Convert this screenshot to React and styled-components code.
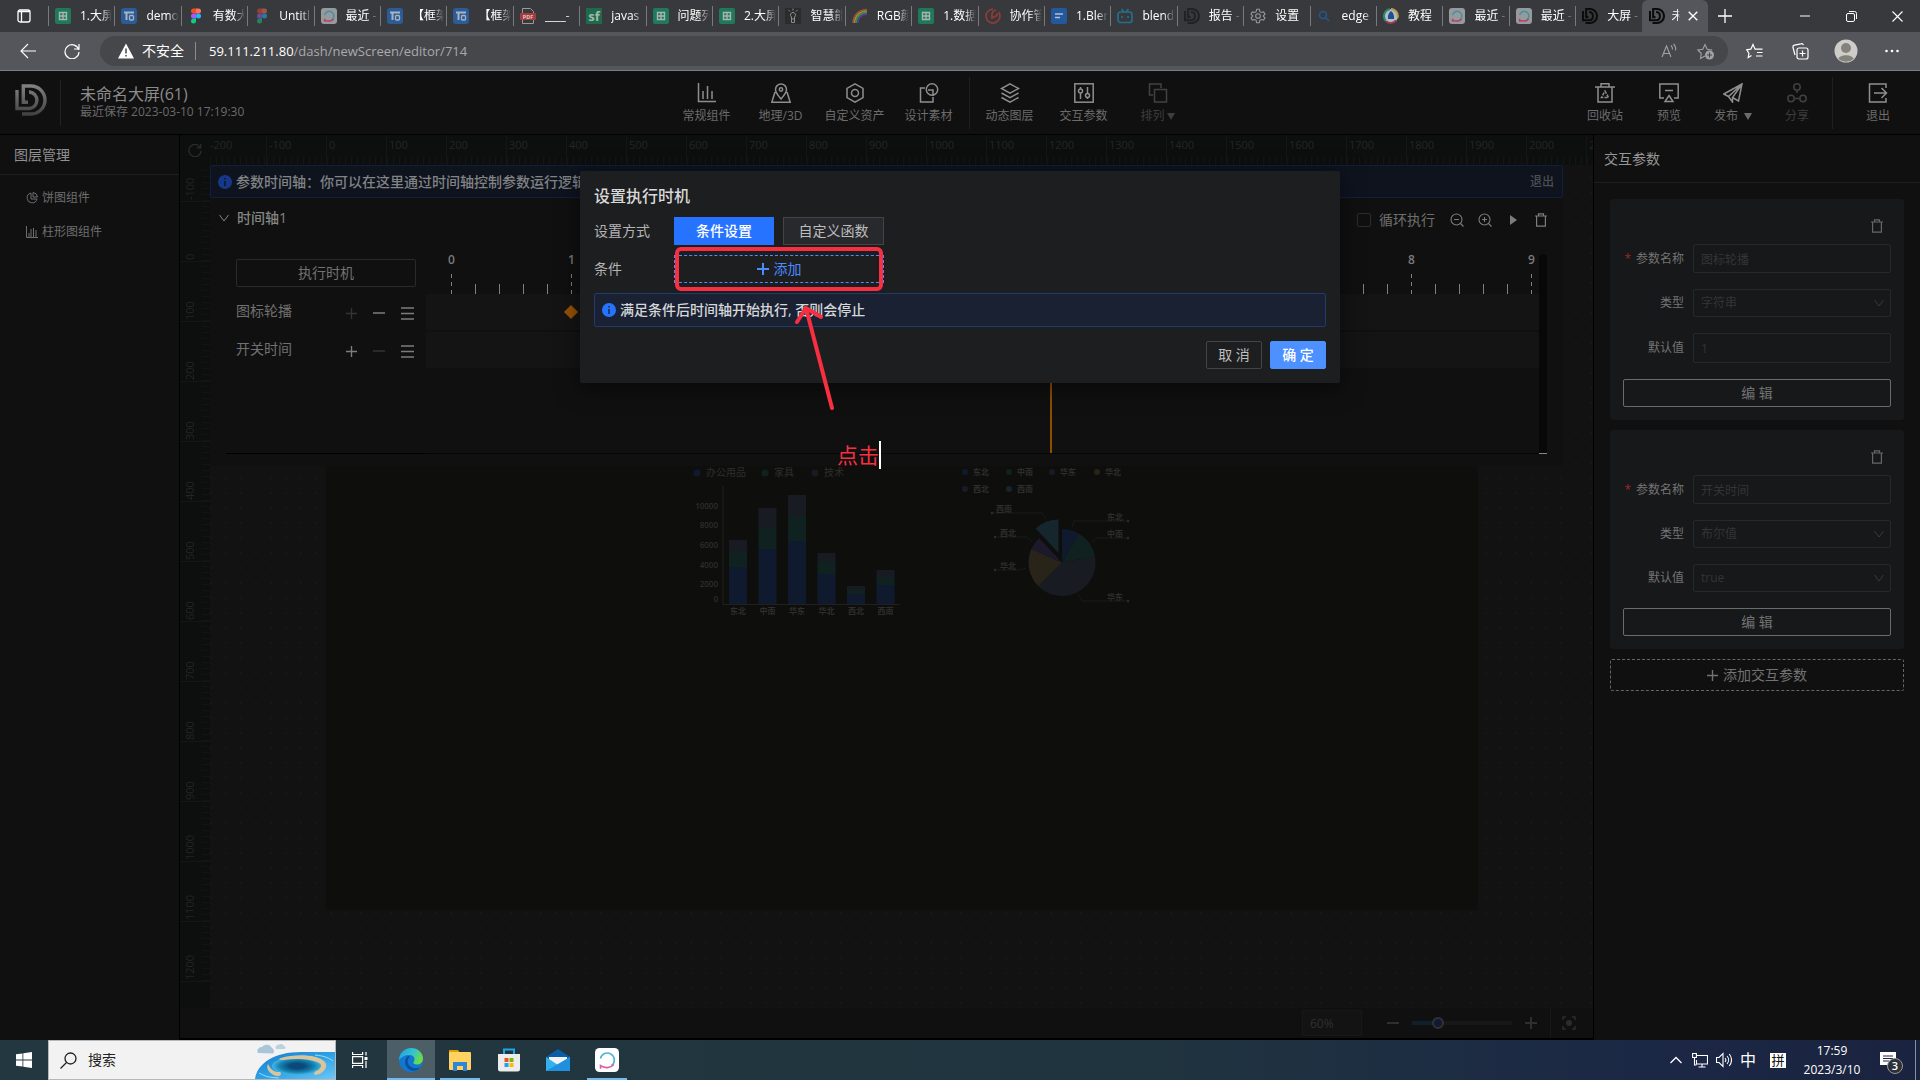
import React, { useState } from 'react'
import styled, { createGlobalStyle, css } from 'styled-components'

const GlobalStyle = createGlobalStyle`
    * { box-sizing: border-box; }
    body {
        margin: 0;
        background: #101010;
        color: #808080;
        font: 14px/20px "Open Sans", "Noto Sans CJK SC", sans-serif;
    }
    button, input, select {
        font: inherit;
        color: inherit;
        margin: 0;
        padding: 0;
        border: 0;
        background: none;
        opacity: 1;
    }
    svg { display: block; flex: none; }
`

/* ---------- layout ---------- */

const Page = styled.div`
    display: flex;
    flex-direction: column;
    height: 100vh;
    overflow: hidden;
`
const Editor = styled.div`
    flex: 1;
    min-height: 0;
    position: relative;
    display: flex;
    flex-direction: column;
    background: #101010;
`
const Body = styled.div`
    flex: 1;
    min-height: 0;
    display: grid;
    grid-template-columns: 180px minmax(0, 1fr) 327px;
    grid-template-rows: minmax(0, 1fr);
`

/* ---------- browser ---------- */

const TabStrip = styled.div`
    display: flex;
    align-items: center;
    height: 32px;
    background: #38393d;
    color: #fff;
`
const TabMenu = styled.button`
    width: 48px;
    display: flex;
    justify-content: center;
`
const Tabs = styled.div`
    flex: 1;
    min-width: 0;
    display: grid;
    grid-auto-flow: column;
    grid-auto-columns: minmax(0, 1fr);
    align-items: center;
`
const Tab = styled.button`
    min-width: 0;
    height: 20px;
    display: flex;
    align-items: center;
    gap: 9px;
    padding: 0 2px 0 6px;
    border-left: 1px solid #797a7d;
    font-size: 12px;
    ${p => p.$active && css`
        height: 32px;
        border-left: 0;
        padding: 0 9px 0 7px;
        gap: 7px;
        border-radius: 6px 6px 0 0;
        background: #55565b;
    `}
`
const TabText = styled.span`
    flex: 1;
    min-width: 0;
    overflow: hidden;
    white-space: nowrap;
    text-align: left;
    mask-image: linear-gradient(to right, #000 65%, transparent);
`
const WindowButtons = styled.div`
    width: 212px;
    display: flex;
    align-items: center;
`
const NewTab = styled.button`
    display: flex;
    justify-content: center;
    width: 34px;
    margin-right: auto;
`
const WinButton = styled.button`
    display: flex;
    justify-content: center;
    width: 46px;
`
const NavBar = styled.div`
    display: flex;
    align-items: center;
    height: 39px;
    padding: 0 5px 0 20px;
    background: #55565b;
    border-bottom: 1px solid #7d7e82;
    color: #fff;
`
const NavButton = styled.button`
    width: 44px;
    display: flex;
    ${p => p.$center && css`
        width: 46px;
        justify-content: center;
    `}
`
const Address = styled.div`
    flex: 1;
    display: flex;
    align-items: center;
    height: 30px;
    margin-left: -8px;
    margin-right: 3px;
    padding: 0 14px 0 18px;
    border-radius: 15px;
    background: #46474b;
`
const Unsafe = styled.span`
    padding: 0 11px 0 8px;
    border-right: 1px solid #8b8c8f;
    line-height: 18px;
`
const Url = styled.span`
    flex: 1;
    margin-left: 13px;
    font-size: 13px;
    color: #a9aaac;
    b { font-weight: 400; color: #fff; }
`
const AddressIcons = styled.div`
    display: flex;
    gap: 20px;
    color: #a0a1a3;
`

/* ---------- editor header ---------- */

const Header = styled.header`
    display: grid;
    grid-template-columns: 12fr auto 13fr;
    height: 64px;
    border-bottom: 1px solid #000;
`
const HeaderLeft = styled.div`
    display: flex;
    align-items: center;
`
const LogoBox = styled.div`
    width: 61px;
    height: 46px;
    display: flex;
    align-items: center;
    padding-left: 15px;
    padding-bottom: 5px;
    border-right: 1px solid #222;
`
const TitleBox = styled.div`
    padding-left: 19px;
    padding-bottom: 2px;
`
const Title = styled.div`
    font-size: 16px;
    line-height: 20px;
    color: #8c8c8c;
`
const Saved = styled.div`
    font-size: 12px;
    line-height: 16px;
    color: #6b6b6b;
`
const Tools = styled.nav`
    display: flex;
    align-items: center;
    ${p => p.$end && css`justify-content: flex-end;`}
`
const Tool = styled.button`
    width: ${p => p.$w || 74}px;
    display: flex;
    flex-direction: column;
    align-items: center;
    gap: 5px;
    padding-top: 2px;
    font-size: 12px;
    line-height: 16px;
    white-space: nowrap;
    color: ${p => p.$dim ? '#3d3d3d' : '#6c6c6c'};
    svg { color: ${p => p.$dim ? '#414141' : '#8e8e8e'}; }
`
const ToolLabel = styled.span`
    display: flex;
    align-items: center;
    gap: ${p => p.$gap || 2}px;
    svg { color: inherit; }
`
const ToolDivider = styled.span`
    width: 1px;
    height: 52px;
    margin: 0 3px;
    background: #1f1f1f;
`

/* ---------- side panels ---------- */

const Layers = styled.aside`
    border-right: 1px solid #000;
`
const LayersTitle = styled.h2`
    margin: 0 0 6px;
    height: 40px;
    padding-left: 14px;
    border-bottom: 1px solid #1e1e1e;
    font-size: 14px;
    font-weight: 400;
    line-height: 40px;
    color: #919191;
`
const Layer = styled.div`
    display: flex;
    align-items: center;
    gap: 4px;
    height: 34px;
    padding-left: 26px;
    font-size: 12px;
    color: #6e6e6e;
`
const Params = styled.aside`
    border-left: 1px solid #000;
`
const ParamsTitle = styled.h2`
    margin: 0;
    height: 48px;
    padding-left: 10px;
    border-bottom: 1px solid #1e1e1e;
    font-size: 14px;
    font-weight: 400;
    line-height: 48px;
    color: #969696;
`
const ParamList = styled.div`
    display: flex;
    flex-direction: column;
    gap: 10px;
    padding: 16px 16px 0;
    font-size: 12px;
`
const Card = styled.section`
    display: flex;
    flex-direction: column;
    gap: 16px;
    padding: 20px 13px 13px;
    border-radius: 3px;
    background: #171819;
`
const CardHead = styled.div`
    display: flex;
    justify-content: flex-end;
    height: 9px;
    padding-right: 8px;
    color: #666;
`
const Field = styled.div`
    display: grid;
    grid-template-columns: 61px 1fr;
    column-gap: 9px;
    align-items: center;
`
const FieldLabel = styled.label`
    text-align: right;
    white-space: nowrap;
    color: #747474;
`
const Star = styled.span`
    margin-right: 5px;
    color: #97292b;
`
const FieldInput = styled.input`
    width: 100%;
    min-width: 0;
    height: ${p => p.$tall ? 30 : 29}px;
    padding: 0 7px;
    border: 1px solid #272829;
    border-radius: 2px;
    color: #343536;
    outline: none;
`
const SelectBox = styled.div`
    position: relative;
    svg {
        position: absolute;
        right: 7px;
        top: 9px;
        color: #3a3b3c;
    }
`
const FieldSelect = styled.select`
    width: 100%;
    height: 28px;
    padding: 0 7px;
    appearance: none;
    border: 1px solid #272829;
    border-radius: 2px;
    color: #343536;
`
const EditButton = styled.button`
    height: 28px;
    border: 1px solid #6a6b6b;
    border-radius: 2px;
    font-size: 14px;
    color: #727272;
`
const AddParam = styled.button`
    display: flex;
    align-items: center;
    justify-content: center;
    gap: 5px;
    height: 32px;
    border: 1px dashed #666;
    border-radius: 2px;
    font-size: 14px;
    color: #727272;
`

/* ---------- workspace ---------- */

const Workspace = styled.main`
    min-width: 0;
    display: grid;
    grid-template-columns: 30px minmax(0, 1fr);
    grid-template-rows: 30px minmax(0, 1fr) 32px;
`
const Corner = styled.button`
    display: flex;
    align-items: center;
    justify-content: center;
    background: #0d0f0e;
    color: #2c2d2d;
`
const RulerX = styled.div`
    display: flex;
    overflow: hidden;
    padding-left: 56px;
    background: #0d0f0e;
    font-size: 11px;
    line-height: 20px;
    color: #242626;
`
const RulerMark = styled.span`
    flex: none;
    width: 60px;
    padding-left: 2px;
    border-left: 1px solid #131615;
    background: repeating-linear-gradient(to right, #121514 0 1px, transparent 1px 6px) bottom / 100% 8px no-repeat;
    ${p => p.$first && css`
        width: 56px;
        margin-left: -56px;
        padding-left: 0;
        border-left: 0;
    `}
`
const RulerY = styled.div`
    overflow: hidden;
    padding-top: 37px;
    background: #0d0f0e;
    font-size: 11px;
    line-height: 20px;
    color: #242626;
`
const RulerMarkY = styled.span`
    display: block;
    width: 30px;
    height: 60px;
    padding-top: 1px;
    padding-left: 10px;
    writing-mode: vertical-rl;
    transform: rotate(180deg);
    border-top: 1px solid #131615;
    background: repeating-linear-gradient(#121514 0 1px, transparent 1px 6px) left / 8px 100% no-repeat;
    ${p => p.$first && css`margin-top: -60px;`}
`
const Stage = styled.div`
    position: relative;
    overflow: hidden;
    background: radial-gradient(circle at 1px 1px, #161817 1px, transparent 1px) 0 12px / 15px 15px #121212;
`
const Artboard = styled.div`
    position: absolute;
    left: 116px;
    top: 97px;
    width: 1152px;
    height: 648px;
    background: #0e0e0c;
`
const StageBar = styled.div`
    grid-column: 1 / 3;
    display: flex;
    align-items: center;
    justify-content: flex-end;
    border-bottom: 2px solid #000;
    font-size: 12px;
    color: #333;
`
const ZoomInput = styled.input`
    width: 60px;
    height: 26px;
    padding-left: 7px;
    border: 1px solid #181818;
    background: #131313;
    color: #303030;
`
const ZoomButton = styled.button`
    display: flex;
    justify-content: center;
    width: 38px;
    color: #2f2f2f;
`
const Slider = styled.input`
    width: 100px;
    height: 14px;
    appearance: none;
    background: linear-gradient(to right, #10202b 26%, #171717 26%) center / 100% 4px no-repeat;
    &::-webkit-slider-thumb {
        appearance: none;
        width: 12px;
        height: 12px;
        border: 2px solid #303236;
        border-radius: 50%;
        background: #101b33;
    }
`
const FitButton = styled.button`
    display: flex;
    justify-content: center;
    align-items: center;
    width: 43px;
    height: 30px;
    padding-right: 6px;
    border-left: 1px solid #181818;
    color: #2c2c2c;
`

/* ---------- timeline ---------- */

const Timeline = styled.section`
    position: absolute;
    top: 0;
    left: 0;
    right: 30px;
    height: 301px;
    background: #101010;
`
const Banner = styled.div`
    display: flex;
    align-items: center;
    gap: 4px;
    height: ${p => p.$modal ? 34 : 33}px;
    padding: 0 8px 0 7px;
    border: 1px solid ${p => p.$modal ? '#21396b' : '#121f3c'};
    border-radius: 2px;
    background: ${p => p.$modal ? '#1a2133' : '#0e131e'};
    color: ${p => p.$modal ? '#d6d7d9' : '#828385'};
    font-weight: 500;
`
const BannerExit = styled.button`
    margin-left: auto;
    font-size: 12px;
    color: #4d4e51;
`
const TimelineHead = styled.div`
    display: flex;
    align-items: center;
    height: 43px;
    padding: 0 14px 0 9px;
    color: #848484;
`
const TimelineName = styled.button`
    display: flex;
    align-items: center;
    gap: 8px;
    margin-right: auto;
    padding-bottom: 3px;
    font-weight: 500;
`
const Check = styled.label`
    display: flex;
    align-items: center;
    gap: 8px;
    margin-right: 2px;
    color: #6f6f6f;
    input {
        appearance: none;
        width: 14px;
        height: 14px;
        border: 1px solid #2c2c2c;
        border-radius: 2px;
    }
`
const HeadIcon = styled.button`
    width: 16px;
    display: flex;
    justify-content: center;
    margin-left: 12px;
    color: #7c7c7c;
`
const TimelineBody = styled.div`
    display: grid;
    grid-template-columns: 200px minmax(0, 1fr) 8px;
    margin: 13px 16px 0;
    height: 200px;
    border-bottom: 1px solid #060606;
`
const TrackNames = styled.div`
    margin-bottom: -1px;
    padding: 5px 10px 0;
    border-bottom: 1px solid #000;
`
const RunButton = styled.button`
    width: 100%;
    height: 28px;
    margin-bottom: 7px;
    border: 1px solid #2a2a2a;
    border-radius: 2px;
    color: #727272;
`
const TrackName = styled.div`
    display: flex;
    align-items: center;
    height: 38px;
    padding-bottom: 4px;
    color: #717171;
    span { flex: 1; }
`
const TrackButton = styled.button`
    width: 28px;
    display: flex;
    justify-content: center;
    padding-top: 4px;
    color: ${p => p.$dim ? '#333' : '#7c7c7c'};
    &:last-child {
        width: 23px;
        justify-content: flex-end;
        padding-right: 2px;
    }
`
const Tracks = styled.div`
    position: relative;
    overflow: hidden;
`
const Seconds = styled.div`
    display: flex;
    height: 40px;
    padding-left: 25px;
    font-size: 12px;
    line-height: 12px;
    font-weight: 600;
    color: #7a7a7a;
`
const Second = styled.div`
    flex: none;
    width: 120px;
    background: linear-gradient(to right,
        transparent 24px, #808080 24px 25px, transparent 25px 48px,
        #808080 48px 49px, transparent 49px 72px,
        #808080 72px 73px, transparent 73px 96px,
        #808080 96px 97px, transparent 97px) bottom / 100% 10px no-repeat;
`
const SecondLabel = styled.span`
    display: flex;
    justify-content: center;
    width: 1px;
    height: 20px;
`
const SecondTick = styled.span`
    display: block;
    width: 1px;
    height: 20px;
    background: repeating-linear-gradient(#808080 0 4px, transparent 4px 8px);
`
const Track = styled.div`
    display: flex;
    align-items: center;
    height: 36px;
    margin-bottom: 2px;
    background: #141414;
`
const KeyFrame = styled.span`
    width: 10px;
    height: 10px;
    margin-left: 140px;
    transform: rotate(45deg);
    background: #985204;
`
const PlayHead = styled.span`
    position: absolute;
    top: 40px;
    bottom: 0;
    left: 624px;
    width: 2px;
    background: #8f4d00;
`
const ScrollBar = styled.div`
    border-radius: 4px 4px 0 0;
    background: #080808;
    margin-bottom: -1px;
    border-bottom: 1px solid #888;
`

/* ---------- modal ---------- */

const Modal = styled.div`
    position: absolute;
    top: 100px;
    left: 50%;
    width: 760px;
    margin-left: -380px;
    padding: 14px;
    border-radius: 2px;
    background: #1d1e20;
    box-shadow: 0 4px 24px rgba(0, 0, 0, .5);
    color: #b4b4b5;
`
const ModalTitle = styled.h1`
    margin: 0 0 10px;
    font-size: 16px;
    line-height: 22px;
    font-weight: 500;
    color: #d9d9d9;
`
const ModalRow = styled.div`
    display: grid;
    grid-template-columns: 80px 100px 101px;
    align-items: center;
    height: 28px;
    margin-bottom: 10px;
`
const ModeButton = styled.button`
    height: 28px;
    border: 1px solid ${p => p.$on ? '#2673ff' : '#434446'};
    background: ${p => p.$on ? '#2673ff' : '#28292c'};
    color: ${p => p.$on ? '#fff' : '#bdbdbe'};
    font-weight: ${p => p.$on ? 500 : 400};
    ${p => !p.$on && css`margin-left: 9px; margin-right: -9px;`}
`
const AddButton = styled.button`
    grid-column: 2 / 4;
    display: flex;
    align-items: center;
    justify-content: center;
    gap: 5px;
    height: 28px;
    margin-right: -9px;
    border: 1px dashed #4b8bff;
    color: #4b8bff;
`
const ModalFoot = styled.div`
    display: flex;
    justify-content: flex-end;
    gap: 8px;
    margin-top: 14px;
`
const FootButton = styled.button`
    width: 56px;
    height: 28px;
    border: 1px solid ${p => p.$primary ? '#4d90ff' : '#434446'};
    border-radius: 2px;
    background: ${p => p.$primary ? '#4d90ff' : 'transparent'};
    color: ${p => p.$primary ? '#fff' : '#bdbdbe'};
    font-weight: ${p => p.$primary ? 500 : 400};
`

/* ---------- marks over the modal ---------- */

const MarkFrame = styled.div`
    position: absolute;
    top: 176px;
    left: 50%;
    width: 208px;
    height: 44px;
    margin-left: -285px;
    border: 4px solid #f72f40;
    border-radius: 6px;
`
const MarkArrow = styled.svg`
    position: absolute;
    top: 231px;
    left: 50%;
    margin-left: -166px;
`
const MarkNote = styled.div`
    position: absolute;
    top: 370px;
    left: 50%;
    margin-left: -123px;
    height: 28px;
    border-right: 2px solid #fff;
    font-size: 21px;
    line-height: 28px;
    color: #f72f40;
`

/* ---------- taskbar ---------- */

const TaskBar = styled.footer`
    display: flex;
    height: 40px;
    background: linear-gradient(to right, #22373f, #20343f 60%, #1b2845 85%, #1a2340);
    color: #fff;
`
const TaskButton = styled.button`
    display: flex;
    align-items: center;
    justify-content: center;
    width: ${p => p.$w || 49}px;
    margin-left: ${p => p.$gap || 0}px;
    ${p => p.$open && css`border-bottom: 2px solid #76b9ed; padding-top: 2px;`}
    ${p => p.$active && css`background: #4c5f66;`}
`
const Search = styled.label`
    display: flex;
    align-items: center;
    width: 288px;
    padding-left: 11px;
    border: 1px solid #b5b8ba;
    background: #f2f2f2;
    color: #222;
    input {
        flex: 1;
        min-width: 0;
        padding-left: 11px;
        outline: none;
        &::placeholder { color: #222; opacity: 1; }
    }
`
const Tray = styled.div`
    display: flex;
    align-items: center;
    margin-left: auto;
    padding-right: 4px;
`
const TrayItem = styled.span`
    display: flex;
    justify-content: center;
    width: ${p => p.$w || 24}px;
    font-size: 16px;
`
const Ime = styled.span`
    padding: 0 1px;
    background: #fff;
    color: #111;
    font-size: 13px;
    line-height: 15px;
`
const Clock = styled.time`
    width: 72px;
    text-align: center;
    font-size: 12px;
    line-height: 19px;
`
const Notice = styled.span`
    position: relative;
    margin-left: 12px;
    width: 35px;
`
const NoticeCount = styled.span`
    position: absolute;
    left: 7px;
    top: 6px;
    width: 16px;
    height: 16px;
    border: 1px solid #999;
    border-radius: 50%;
    background: #2c3038;
    font-size: 11px;
    line-height: 14px;
    font-weight: 600;
    text-align: center;
`
const ShowDesktop = styled.span`
    width: 1px;
    height: 40px;
    background: #8b8f9c;
`

/* ---------- icons ---------- */

const Svg = ({ size = 20, w, h, box = '0 0 20 20', sw = 1.5, children }) => (
    <svg width={w || size} height={h || size} viewBox={box} fill="none" stroke="currentColor" strokeWidth={sw} aria-hidden="true">
        {children}
    </svg>
)

const Plus = ({ size = 12, sw = 1.5 }) => <Svg size={size} box="0 0 12 12" sw={sw}><path d="M6 0v12M0 6h12" /></Svg>
const Minus = ({ size = 12, sw = 1.5 }) => <Svg size={size} box="0 0 12 12" sw={sw}><path d="M0 6h12" /></Svg>
const Menu = () => <Svg size={13} box="0 0 13 13"><path d="M0 1h13M0 6.500h13M0 12h13" /></Svg>
const Down = ({ size = 10 }) => <Svg size={size} box="0 0 10 10" sw={1}><path d="M.5 2l4.500 6 4.500-6" /></Svg>
const Caret = () => <svg width="8" height="7" viewBox="0 0 8 7" fill="currentColor"><path d="M0 0h8L4 7z" /></svg>
const Trash = () => (
    <Svg w={12} h={14} box="0 0 12 14" sw={1.2}><path d="M0 3h12M1.600 3v10.200h8.800V3M3.500 3V.8h5V3" /></Svg>
)
const Info = ({ fill, ink }) => (
    <svg width="14" height="14" viewBox="0 0 14 14"><circle cx="7" cy="7" r="7" fill={fill} /><path d="M7 3v1.600M7 6v5" stroke={ink} strokeWidth="1.400" /></svg>
)

const DdMark = ({ size, from, to, id, sw = 3.4 }) => (
    <svg width={size} height={size} viewBox="0 0 32 32" fill="none" stroke={`url(#${id})`} strokeWidth={sw}>
        <defs>
            <linearGradient id={id} x1="0" y1="0" x2="0" y2="32" gradientUnits="userSpaceOnUse">
                <stop stopColor={from} /><stop offset="1" stopColor={to} />
            </linearGradient>
        </defs>
        <path d="M2 6v18.500h12.500a8.300 8.300 0 0 0 0-16.500H14" />
        <path d="M13 18.300H8.300V2H16a13.800 13.800 0 0 1 0 28H7" />
    </svg>
)

const Sheet = () => (
    <svg width="16" height="16" viewBox="0 0 16 16"><rect width="16" height="16" rx="2" fill="#20795a" /><path d="M4.500 4.500h7v7h-7zM8 4.500v7M4.500 8h7" fill="none" stroke="#a9b5b0" strokeWidth="1.400" /></svg>
)
const To = () => (
    <svg width="16" height="16" viewBox="0 0 16 16"><rect width="16" height="16" rx="3" fill="#2b5c98" /><path d="M3 4.500h10M5.500 4.500V12" stroke="#a9b3c0" strokeWidth="2" /><rect x="8.500" y="7.500" width="4" height="4.500" rx="1" fill="none" stroke="#a9b3c0" strokeWidth="1.300" /></svg>
)
const Figma = ({ dim }) => (
    <svg width="16" height="16" viewBox="0 0 16 16" opacity={dim ? .5 : 1}>
        <path d="M8 .5H5.500a2.500 2.500 0 0 0 0 5H8z" fill="#f24e1e" /><path d="M8 .5h2.500a2.500 2.500 0 0 1 0 5H8z" fill="#ff7262" />
        <path d="M8 5.500H5.500a2.500 2.500 0 0 0 0 5H8z" fill="#a259ff" /><circle cx="10.500" cy="8" r="2.500" fill="#1abcfe" />
        <path d="M8 10.500H5.500A2.500 2.500 0 1 0 8 13z" fill="#0acf83" />
    </svg>
)
const FigmaDim = () => <Figma dim />
const Mo = ({ size = 16, bg = '#98999b', a = '#3f93a8', b = '#b3406f', sw = 1.5 }) => (
    <svg width={size} height={size} viewBox="0 0 16 16" fill="none" strokeWidth={sw}><rect width="16" height="16" rx="3" fill={bg} /><path d="M3.600 7A4.700 4.700 0 1 1 11 11.800" stroke={a} /><path d="M12.500 11c-2 2.500-6 2.800-8.800.8V13.800" stroke={b} /></svg>
)
const Pdf = () => (
    <svg width="16" height="16" viewBox="0 0 16 16"><path d="M2.500.5h8l3 3v12h-11z" fill="none" stroke="#9a9a9a" /><rect x="0" y="5" width="16" height="7" rx="1" fill="#a53c3c" /><text x="8" y="10.600" fontSize="5.500" fontWeight="700" fill="#d9c9c9" textAnchor="middle">PDF</text></svg>
)
const Sf = () => (
    <svg width="16" height="16" viewBox="0 0 16 16"><rect width="16" height="16" fill="#1f6a4b" /><text x="8" y="12.500" fontSize="13" fontWeight="700" fill="#a3b8ae" textAnchor="middle">sf</text></svg>
)
const Bulb = () => (
    <svg width="16" height="16" viewBox="0 0 16 16" fill="none" stroke="#8d8d8d"><rect width="16" height="16" fill="#2b2c2e" stroke="none" /><path d="M6.500 11v3.500h3V11M6.500 11V9a2.500 2.500 0 1 1 3 0v2zM3.500 2L5 3.500M12.500 2L11 3.500M8 .5v2" /></svg>
)
const Rainbow = () => (
    <svg width="16" height="16" viewBox="0 0 16 16" fill="none" strokeWidth="1.600"><path d="M1 15C1 7 7 1.500 15 1.500" stroke="#a04a3a" /><path d="M2.600 15C2.600 8 8 3 15 3" stroke="#a0903a" /><path d="M4.200 15C4.200 9 9 4.600 15 4.600" stroke="#3a8a4a" /><path d="M5.800 15c0-5 4-8.800 9.200-8.800" stroke="#5a3aa0" /></svg>
)
const Swirl = () => (
    <svg width="16" height="16" viewBox="0 0 16 16" fill="none" stroke="#8f3c38" strokeWidth="1.700"><path d="M13.500 4A6.900 6.900 0 1 1 8 1.200M7 11V6.500C7 4 8.500 2.500 11 2M7 8.500c3 1 5-.5 5.500-3" /></svg>
)
const Doc = () => (
    <svg width="16" height="16" viewBox="0 0 16 16"><rect width="16" height="16" rx="2" fill="#23589c" /><path d="M4 6h8M4 9.500h5" stroke="#b4c0d0" strokeWidth="1.600" /></svg>
)
const Bili = () => (
    <svg width="16" height="16" viewBox="0 0 16 16" fill="none" stroke="#24708c" strokeWidth="1.700"><rect x="1" y="4" width="14" height="10.500" rx="2.500" /><path d="M4.500 1l2.500 3M11.500 1L9 4M5 8v2M11 8v2" /></svg>
)
const Gear = () => (
    <svg width="16" height="16" viewBox="0 0 24 24" fill="none" stroke="#97989a" strokeWidth="1.600"><circle cx="12" cy="12" r="3.500" /><path d="M10 2h4l.8 3.400 2.400 1.400 3.300-1 2 3.500L20 11.600v.8l2.500 2.300-2 3.500-3.300-1-2.400 1.400L14 22h-4l-.8-3.400-2.400-1.400-3.300 1-2-3.500L4 12.400v-.8L1.500 9.300l2-3.500 3.300 1 2.400-1.400z" /></svg>
)
const Lens = () => (
    <svg width="16" height="16" viewBox="0 0 16 16" fill="none" stroke="#23598a" strokeWidth="1.500"><circle cx="6" cy="7" r="3.500" /><path d="M8.500 9.500L12 13" /></svg>
)
const Edu = () => (
    <svg width="16" height="16" viewBox="0 0 16 16" fill="none"><circle cx="8" cy="8" r="7" fill="#b7bcc0" /><path d="M3 13A7 7 0 0 1 7 1.200" stroke="#2c8a72" strokeWidth="2" /><path d="M8 1a7 7 0 0 1 6.500 9" stroke="#b3a04a" strokeWidth="2" /><path d="M3.500 13.500a7 7 0 0 0 9.500-1" stroke="#a03a5a" strokeWidth="2" /><path d="M8 3c2.500 1.500 3.500 5 3 8H5c-.5-3 .5-6.500 3-8z" fill="#1f4f94" /></svg>
)
const Dd = () => <DdMark size={16} id="ddTab" from="#0c0c0c" to="#0c0c0c" sw={4.2} />
const DdDim = () => <DdMark size={16} id="ddDim" from="#212224" to="#212224" sw={4.2} />

const tabs = [
    { icon: Sheet, text: '1.大屏' },
    { icon: To, text: 'demo' },
    { icon: Figma, text: '有数大' },
    { icon: FigmaDim, text: 'Untitl' },
    { icon: Mo, text: '最近 -' },
    { icon: To, text: '【框架' },
    { icon: To, text: '【框架' },
    { icon: Pdf, text: '____-' },
    { icon: Sf, text: 'javas' },
    { icon: Sheet, text: '问题列' },
    { icon: Sheet, text: '2.大屏' },
    { icon: Bulb, text: '智慧能' },
    { icon: Rainbow, text: 'RGB颜' },
    { icon: Sheet, text: '1.数据' },
    { icon: Swirl, text: '协作管' },
    { icon: Doc, text: '1.Bler' },
    { icon: Bili, text: 'blend' },
    { icon: DdDim, text: '报告 -' },
    { icon: Gear, text: '设置' },
    { icon: Lens, text: 'edge' },
    { icon: Edu, text: '教程' },
    { icon: Mo, text: '最近 -' },
    { icon: Mo, text: '最近 -' },
    { icon: Dd, text: '大屏 -' },
]

const Browser = () => (
    <>
        <TabStrip>
            <TabMenu aria-label="tabs">
                <Svg size={14} box="0 0 14 14" sw={1.3}><rect x="1" y="1" width="12" height="12" rx="2" /><path d="M1 2.500h12M4.500 3v10" /></Svg>
            </TabMenu>
            <Tabs>
                {tabs.map((tab, i) => (
                    <Tab key={i}><tab.icon /><TabText>{tab.text}</TabText></Tab>
                ))}
                <Tab $active>
                    <Dd />
                    <TabText>未</TabText>
                    <Svg size={12} box="0 0 14 14" sw={1.6}><path d="M2 2l10 10M12 2L2 12" /></Svg>
                </Tab>
            </Tabs>
            <WindowButtons>
                <NewTab aria-label="new tab"><Plus size={14} sw={1.1} /></NewTab>
                <WinButton aria-label="minimize"><Minus size={10} sw={1.2} /></WinButton>
                <WinButton aria-label="restore"><Svg size={11} box="0 0 11 11" sw={1}><rect x=".5" y="2.500" width="8" height="8" rx="1.500" /><path d="M3 .5h5.500a2 2 0 0 1 2 2V8" /></Svg></WinButton>
                <WinButton aria-label="close"><Svg size={11} box="0 0 11 11" sw={1.1}><path d="M.5.5l10 10M10.500.5l-10 10" /></Svg></WinButton>
            </WindowButtons>
        </TabStrip>
        <NavBar>
            <NavButton aria-label="back"><Svg size={16} box="0 0 16 16" sw={1.1}><path d="M16 8H1M8 1L1 8l7 7" /></Svg></NavButton>
            <NavButton aria-label="reload"><Svg size={16} box="0 0 16 16" sw={1.2}><path d="M14.800 7A7 7 0 1 0 15 9M15 1v5h-5" /></Svg></NavButton>
            <Address>
                <svg width="16" height="16" viewBox="0 0 16 16"><path d="M8 .5l8 15H0z" fill="#fff" /><path d="M8 5.500v5M8 12v1.600" stroke="#46474b" strokeWidth="1.500" /></svg>
                <Unsafe>不安全</Unsafe>
                <Url><b>59.111.211.80</b>/dash/newScreen/editor/714</Url>
                <AddressIcons>
                    <Svg size={16} box="0 0 16 16" sw={1.1}><path d="M1 14L5.500 3 10 14M2.500 10.500h6M10 2.500a5 5 0 0 1 1.500 4M12.500 1a7 7 0 0 1 2 6.500" /></Svg>
                    <Svg size={17} box="0 0 17 17" sw={1.1}><path d="M8 13l-4.500 2.500.8-5L.8 7l5-.7L8 1.500l2.200 4.800 5 .7" /><circle cx="12.500" cy="12" r="4.500" fill="currentColor" stroke="none" /><path d="M12.500 9.500v5M10 12h5" stroke="#46474b" /></Svg>
                </AddressIcons>
            </Address>
            <NavButton $center aria-label="favorites"><Svg size={17} box="0 0 17 17" sw={1.2}><path d="M5.500 12.500l-3.300 2 .7-4.200L.8 6.800l4-.6L7 1.500l2 4.700h7.500M11 9.500h5.500M10 13h6.500" /></Svg></NavButton>
            <NavButton $center aria-label="collections"><Svg size={17} box="0 0 17 17" sw={1.2}><rect x="5" y="5" width="11" height="11" rx="2" /><path d="M10.500 7.500v6M7.500 10.500h6M3 12L1 4.500a2 2 0 0 1 1.400-2.400L9 .8a2 2 0 0 1 2.400 1.400" /></Svg></NavButton>
            <NavButton $center aria-label="profile">
                <svg width="24" height="24" viewBox="0 0 24 24"><circle cx="12" cy="12" r="11.500" fill="#cfcdc9" /><circle cx="12" cy="9" r="5" fill="#85827c" /><path d="M4.500 20c1-5 14-5 15 0a11.500 11.500 0 0 1-15 0z" fill="#85827c" /></svg>
            </NavButton>
            <NavButton $center aria-label="more"><svg width="14" height="4" viewBox="0 0 14 4" fill="#fff"><circle cx="1.500" cy="2" r="1.300" /><circle cx="7" cy="2" r="1.300" /><circle cx="12.500" cy="2" r="1.300" /></svg></NavButton>
        </NavBar>
    </>
)

const EditorHeader = () => (
    <Header>
        <HeaderLeft>
            <LogoBox><DdMark size={32} id="ddLogo" from="#848484" to="#3f3f3f" /></LogoBox>
            <TitleBox>
                <Title>未命名大屏(61)</Title>
                <Saved>最近保存 2023-03-10 17:19:30</Saved>
            </TitleBox>
        </HeaderLeft>
        <Tools>
            <Tool><Svg><path d="M1.500 0v18.500H19M6 8v8M10.500 3v13M15 8v8" /></Svg>常规组件</Tool>
            <Tool><Svg><path d="M4 9L.8 19.200h18.400L16 9M10 16C6.500 12 4.500 9.500 4.500 6.500a5.500 5.500 0 0 1 11 0C15.500 9.500 13.500 12 10 16z" /><circle cx="10" cy="6.500" r="1.700" /></Svg>地理/3D</Tool>
            <Tool><Svg><path d="M10 .9l8 4.500v9.200l-8 4.500-8-4.500V5.400z" /><circle cx="10" cy="10" r="3.500" /></Svg>自定义资产</Tool>
            <Tool><Svg><path d="M6 5H1.500v14H14v-5" /><circle cx="13" cy="6.500" r="5.700" /><path d="M9 7h5v6" /></Svg>设计素材</Tool>
            <ToolDivider />
            <Tool><Svg><path d="M10 .9l8.500 4.600L10 10.100 1.500 5.500zM1.500 10l8.500 4.600 8.500-4.600M1.500 14.500L10 19.100l8.500-4.600" /></Svg>动态图层</Tool>
            <Tool><Svg><rect x=".8" y=".8" width="18.400" height="18.400" /><circle cx="6.500" cy="8" r="2" /><circle cx="13.500" cy="12.500" r="2" /><path d="M6.500 4v2M6.500 10v6M13.500 4v6.500M13.500 14.500V16" /></Svg>交互参数</Tool>
            <Tool $dim><Svg><path d="M5 12H1.500V1H13v4" /><rect x="6.500" y="6.500" width="12" height="12.500" /></Svg><ToolLabel>排列<Caret /></ToolLabel></Tool>
        </Tools>
        <Tools $end>
            <Tool $w={64}><Svg><path d="M0 4h20M3 4v15h14V4M6 4V.8h8V4" /><path d="M10 8l3.500 6.500h-7z" strokeDasharray="3 1.200" /></Svg>回收站</Tool>
            <Tool $w={64}><Svg><path d="M5 15H.8V1h18.400v14H15M6 7.500h8M10 12.500l4 6H6z" /></Svg>预览</Tool>
            <Tool $w={64}><Svg><path d="M19 1L.8 11l4.700 2.500L19 1l-3.500 17-6-3.500M19 1L9.500 14.500V19l-4-5.500" /></Svg><ToolLabel $gap={6}>发布<Caret /></ToolLabel></Tool>
            <Tool $w={64} $dim><Svg><circle cx="10" cy="4" r="3.200" /><circle cx="4" cy="15.500" r="3.200" /><circle cx="16" cy="15.500" r="3.200" /><path d="M10 7v3M8 15.500h4" /></Svg>分享</Tool>
            <ToolDivider />
            <Tool $w={84}><Svg><path d="M18 5V1H1.500v18H18v-4M6 10h12M13.500 5l5 5-5 5" /></Svg>退出</Tool>
        </Tools>
    </Header>
)

const xMarks = Array.from({ length: 23 }, (_, i) => (i - 1) * 100)
const yMarks = Array.from({ length: 13 }, (_, i) => i * 100)

const bars = [
    { name: '东北', top: 540, mid: 553, low: 567 },
    { name: '中南', top: 508, mid: 529, low: 549 },
    { name: '华东', top: 495, mid: 516, low: 541 },
    { name: '华北', top: 553, mid: 562, low: 574 },
    { name: '西北', top: 586, mid: 590, low: 594 },
    { name: '西南', top: 570, mid: 577, low: 585 },
]
const colors = { blue: '#101a2e', green: '#102220', grey: '#191b23', gold: '#28241a', violet: '#1b192a', cyan: '#16262d' }
const yLabels = [['10000', 506], ['8000', 525], ['6000', 545], ['4000', 565], ['2000', 584], ['0', 599]]
const barLegend = [['办公用品', 697, 'blue'], ['家具', 765, 'green'], ['技术', 815, 'grey']]
const pieLegend = [
    ['东北', 965, 472, 'blue'], ['中南', 1009, 472, 'green'], ['华东', 1052, 472, 'grey'], ['华北', 1097, 472, 'gold'],
    ['西北', 965, 489, 'violet'], ['西南', 1009, 489, 'cyan'],
]
const slices = [
    [0, 31, 'blue'], [31, 80, 'green'], [80, 225, 'grey'], [225, 294, 'gold'], [294, 317, 'violet'],
]
/* name, text x/y, leader line, end dot */
const pieLabels = [
    ['东北', 1107, 517, 'M1072 527l2-6h54', 1128, 521], ['中南', 1107, 534, 'M1092 542l5-4h31', 1128, 538],
    ['华东', 1107, 597, 'M1078 594l4 7h46', 1128, 601], ['华北', 1000, 566, 'M1026 568l-6 2h-25', 995, 570],
    ['西北', 1000, 533, 'M1032 541l-5-4h-32', 995, 537], ['西南', 996, 509, 'M1045 519l-3-6h-50', 992, 513],
]

const slicePath = (cx, cy, r, a, b) => {
    const pt = d => [cx + r * Math.sin(d * Math.PI / 180), cy - r * Math.cos(d * Math.PI / 180)].join(' ')
    return `M${cx} ${cy}L${pt(a)}A${r} ${r} 0 ${b - a > 180 ? 1 : 0} 1 ${pt(b)}Z`
}

/* both charts share the artboard, viewBox is in window units */
const Charts = () => (
    <svg width="1152" height="648" viewBox="326 262 1152 648" fill="#2e2f2d" fontSize="8">
        {barLegend.map(([name, x, c]) => (
            <g key={name} fontSize="10"><circle cx={x} cy="473" r="3.500" fill={colors[c]} /><text x={x + 9} y="476">{name}</text></g>
        ))}
        {yLabels.map(([t, y]) => <text key={t} x="718" y={y + 3} textAnchor="end" fontWeight="600">{t}</text>)}
        <path d="M723 486v118.500h177" fill="none" stroke="#20211f" />
        {bars.map((b, i) => {
            const x = 729 + i * 29.5
            return (
                <g key={b.name}>
                    <rect x={x} y={b.top} width="18" height={b.mid - b.top} fill={colors.grey} />
                    <rect x={x} y={b.mid} width="18" height={b.low - b.mid} fill={colors.green} />
                    <rect x={x} y={b.low} width="18" height={604 - b.low} fill={colors.blue} />
                    <text x={x + 9} y="614" textAnchor="middle" fontWeight="600">{b.name}</text>
                </g>
            )
        })}
        {pieLegend.map(([name, x, y, c]) => (
            <g key={name}><circle cx={x} cy={y} r="3" fill={colors[c]} /><text x={x + 8} y={y + 3} fontWeight="600">{name}</text></g>
        ))}
        {slices.map(([a, b, c]) => <path key={c} d={slicePath(1062, 562.5, 33.5, a, b)} fill={colors[c]} />)}
        <path d={slicePath(1058.5, 553, 33.5, 317, 360)} fill={colors.cyan} />
        {pieLabels.map(([name, x, y, d, ex, ey]) => (
            <g key={name}>
                <path d={d} fill="none" stroke="#191b1c" />
                <circle cx={ex} cy={ey} r="1.200" />
                <text x={x} y={y + 3} fontWeight="700">{name}</text>
            </g>
        ))}
    </svg>
)

const TimelinePanel = () => {
    const [loop, setLoop] = useState(false)
    return (
        <Timeline>
            <Banner>
                <Info fill="#16388a" ink="#0e131e" />
                参数时间轴：你可以在这里通过时间轴控制参数运行逻辑
                <BannerExit>退出</BannerExit>
            </Banner>
            <TimelineHead>
                <TimelineName><Down />时间轴1</TimelineName>
                <Check><input type="checkbox" checked={loop} onChange={() => setLoop(!loop)} />循环执行</Check>
                <HeadIcon aria-label="zoom out"><Svg size={14} box="0 0 14 14" sw={1.1}><circle cx="6.500" cy="6.500" r="5.500" /><path d="M4 6.500h5M10.500 10.500l3 3" /></Svg></HeadIcon>
                <HeadIcon aria-label="zoom in"><Svg size={14} box="0 0 14 14" sw={1.1}><circle cx="6.500" cy="6.500" r="5.500" /><path d="M4 6.500h5M6.500 4v5M10.500 10.500l3 3" /></Svg></HeadIcon>
                <HeadIcon aria-label="play"><svg width="7" height="10" viewBox="0 0 7 10" fill="currentColor"><path d="M0 0l7 5-7 5z" /></svg></HeadIcon>
                <HeadIcon aria-label="delete"><Trash /></HeadIcon>
            </TimelineHead>
            <TimelineBody>
                <TrackNames>
                    <RunButton>执行时机</RunButton>
                    <TrackName>
                        <span>图标轮播</span>
                        <TrackButton $dim aria-label="add"><Plus size={11} /></TrackButton>
                        <TrackButton aria-label="remove"><Minus /></TrackButton>
                        <TrackButton aria-label="menu"><Menu /></TrackButton>
                    </TrackName>
                    <TrackName>
                        <span>开关时间</span>
                        <TrackButton aria-label="add"><Plus size={11} /></TrackButton>
                        <TrackButton $dim aria-label="remove"><Minus /></TrackButton>
                        <TrackButton aria-label="menu"><Menu /></TrackButton>
                    </TrackName>
                </TrackNames>
                <Tracks>
                    <Seconds>
                        {[0, 1, 2, 3, 4, 5, 6, 7, 8, 9].map(n => (
                            <Second key={n}><SecondLabel>{n}</SecondLabel><SecondTick /></Second>
                        ))}
                    </Seconds>
                    <Track><KeyFrame /></Track>
                    <Track />
                    <PlayHead />
                </Tracks>
                <ScrollBar />
            </TimelineBody>
        </Timeline>
    )
}

const ZoomGroup = styled.div`
    display: flex;
    align-items: center;
    padding-left: 12px;
`

const Canvas = () => (
    <Workspace>
        <Corner aria-label="reset"><Svg size={14} box="0 0 16 16" sw={1.4}><path d="M14 5A7 7 0 1 0 15 9M14.500 1v4.500H10" /></Svg></Corner>
        <RulerX>
            <RulerMark $first>-200</RulerMark>
            {xMarks.map(n => <RulerMark key={n}>{n}</RulerMark>)}
        </RulerX>
        <RulerY>
            <RulerMarkY $first>-100</RulerMarkY>
            {yMarks.map(n => <RulerMarkY key={n}>{n}</RulerMarkY>)}
        </RulerY>
        <Stage>
            <Artboard><Charts /></Artboard>
            <TimelinePanel />
        </Stage>
        <StageBar>
            <ZoomInput aria-label="zoom" defaultValue="60%" />
            <ZoomGroup>
                <ZoomButton aria-label="zoom out"><Minus sw={2} /></ZoomButton>
                <Slider type="range" min="0" max="100" defaultValue="23" aria-label="scale" />
                <ZoomButton aria-label="zoom in"><Plus sw={2} /></ZoomButton>
            </ZoomGroup>
            <FitButton aria-label="fit"><Svg size={14} box="0 0 14 14"><path d="M1 4V1h3M10 1h3v3M13 10v3h-3M4 13H1v-3" /><circle cx="7" cy="7" r="3" fill="currentColor" stroke="none" /></Svg></FitButton>
        </StageBar>
    </Workspace>
)

const SelectField = ({ id, value }) => (
    <SelectBox>
        <FieldSelect id={id} disabled defaultValue={value}><option>{value}</option></FieldSelect>
        <Down />
    </SelectBox>
)

const ParamCard = ({ id, name, type, value, select }) => (
    <Card>
        <CardHead><Trash /></CardHead>
        <Field>
            <FieldLabel htmlFor={id + 'name'}><Star>*</Star>参数名称</FieldLabel>
            <FieldInput id={id + 'name'} disabled defaultValue={name} />
        </Field>
        <Field>
            <FieldLabel htmlFor={id + 'type'}>类型</FieldLabel>
            <SelectField id={id + 'type'} value={type} />
        </Field>
        <Field>
            <FieldLabel htmlFor={id + 'value'}>默认值</FieldLabel>
            {select
                ? <SelectField id={id + 'value'} value={value} />
                : <FieldInput $tall id={id + 'value'} disabled defaultValue={value} />}
        </Field>
        <EditButton>编 辑</EditButton>
    </Card>
)

const TimingModal = () => (
    <Modal role="dialog">
        <ModalTitle>设置执行时机</ModalTitle>
        <ModalRow>
            <span>设置方式</span>
            <ModeButton $on>条件设置</ModeButton>
            <ModeButton>自定义函数</ModeButton>
        </ModalRow>
        <ModalRow>
            <span>条件</span>
            <AddButton><Plus sw={2} />添加</AddButton>
        </ModalRow>
        <Banner $modal>
            <Info fill="#2673ff" ink="#1a2133" />
            满足条件后时间轴开始执行, 否则会停止
        </Banner>
        <ModalFoot>
            <FootButton>取 消</FootButton>
            <FootButton $primary>确 定</FootButton>
        </ModalFoot>
    </Modal>
)

const Task = () => (
    <TaskBar>
        <TaskButton $w={48} aria-label="start">
            <svg width="16" height="16" viewBox="0 0 16 16" fill="#fff"><path d="M0 2.300L6.500 1.400v6.200H0zM7.300 1.300L16 0v7.600H7.300zM0 8.400h6.500v6.200L0 13.700zM7.300 8.400H16V16l-8.700-1.300z" /></svg>
        </TaskButton>
        <Search>
            <Svg size={17} box="0 0 17 17" sw={1.3}><circle cx="10.500" cy="6.500" r="5.500" /><path d="M6.500 10.500L.5 16.500" /></Svg>
            <input type="text" placeholder="搜索" aria-label="search" />
            <svg width="80" height="38" viewBox="0 0 80 38">
                <defs>
                    <linearGradient id="sea" x1="0" y1="0" x2="1" y2="1"><stop stopColor="#1779c9" /><stop offset=".5" stopColor="#2ba0e6" /><stop offset="1" stopColor="#6cc7f7" /></linearGradient>
                    <radialGradient id="hole"><stop offset=".3" stopColor="#0b4a78" /><stop offset=".7" stopColor="#1583b4" /><stop offset="1" stopColor="#46b8e4" /></radialGradient>
                </defs>
                <path d="M3 12a4 4 0 0 1 4-6 6 6 0 0 1 10 1 3.500 3.500 0 0 1 1 5.500z" fill="#a9c6d8" />
                <path d="M21 8a2.500 2.500 0 0 1 2-4 4 4 0 0 1 6 1 2 2 0 0 1 1 3z" fill="#b9d2e0" />
                <path d="M0 38C2 22 20 11 46 11h34v27z" fill="url(#sea)" />
                <ellipse cx="42" cy="25" rx="25" ry="9" fill="url(#hole)" />
                <path d="M13 23c4 8 8 8 12 8 2 2 1 4-3 4-6-1-12-7-9-12zM26 17c14-4 36-4 44 4 4 5-2 12-9 13-3 0-2-3 0-4 5-2 7-6 3-8-8-4-22-5-36-3-4 0-5-1-2-2z" fill="#d9c49b" />
                <path d="M4 32c8 4 8 4 20 5M60 14c10 1 14 3 18 6" stroke="#9bdcf8" fill="none" />
            </svg>
        </Search>
        <TaskButton $w={47} aria-label="task view">
            <Svg size={16} box="0 0 16 16" sw={1.2}><path d="M.6 0v2.500h10V0M.6 16v-2.500h10V16M.6 4.600h10v6.800H.6zM14 0v3.500M14 9v7" /><path d="M12.500 5h3v3h-3z" fill="currentColor" stroke="none" /></Svg>
        </TaskButton>
        <TaskButton $w={48} $gap={4} $open $active aria-label="edge">
            <svg width="24" height="24" viewBox="0 0 24 24">
                <defs><linearGradient id="edgeA" x1="0" y1="0" x2="1" y2=".4"><stop stopColor="#1f9de0" /><stop offset=".6" stopColor="#35c4cf" /><stop offset="1" stopColor="#68dc4a" /></linearGradient></defs>
                <circle cx="12" cy="12" r="12" fill="#1277cf" />
                <path d="M0 11C1 4 6 0 12 0c7 0 12 5 12 10.500 0 4-3 6-6 6s-4-1-3.500-2.500c.5-1 1-1.500 1-3 0-2-2-4-5-4C6 7 2 9 0 12z" fill="url(#edgeA)" />
                <path d="M9 8c-4 3-4 10 1 13.500 4 2.500 9 1 11-2-8 3-14-3-12-8 .3-1 1-2 2-2.500-.5-.7-1.300-1-2-1z" fill="#0c4f9e" />
            </svg>
        </TaskButton>
        <TaskButton $w={40} $gap={5} $open aria-label="explorer">
            <svg width="24" height="24" viewBox="0 0 24 24"><path d="M1 2h9l2 3H1z" fill="#e0a100" /><rect x="1" y="4" width="22" height="18" rx="1" fill="#ffd262" /><path d="M5 23v-9h14v9h-4v-5H9v5z" fill="#2f86d9" /></svg>
        </TaskButton>
        <TaskButton $gap={4} aria-label="store">
            <svg width="24" height="24" viewBox="0 0 24 24"><path d="M7 6V1.500h10V6" fill="none" stroke="#21a5ea" strokeWidth="2" /><path d="M1 6h22v15a2.500 2.500 0 0 1-2.500 2.500h-17A2.500 2.500 0 0 1 1 21z" fill="#ececec" /><path d="M7.500 10h4v4h-4z" fill="#f04e23" /><path d="M12.500 10h4v4h-4z" fill="#7db800" /><path d="M7.500 15h4v4h-4z" fill="#1ea2ea" /><path d="M12.500 15h4v4h-4z" fill="#fdb813" /></svg>
        </TaskButton>
        <TaskButton aria-label="mail">
            <svg width="24" height="24" viewBox="0 0 24 24"><path d="M0 9l12-8 12 8v13H0z" fill="#0a5ea8" /><path d="M3 9h18v8H3z" fill="#f2f2f2" /><path d="M0 9l12 8 12-8v14H0z" fill="#33b1ee" /><path d="M0 23L24 9v14z" fill="#1f8fe0" /></svg>
        </TaskButton>
        <TaskButton $w={40} $gap={5} $open aria-label="notes"><Mo size={24} bg="#fff" a="#4cb3d4" b="#e05aa6" sw={1.1} /></TaskButton>
        <Tray>
            <TrayItem><Svg size={12} box="0 0 12 12" sw={1.3}><path d="M.5 9L6 3.500 11.500 9" /></Svg></TrayItem>
            <TrayItem><Svg size={16} box="0 0 16 16" sw={1.1}><path d="M4.500 3.500H15.500v8.500h-11V8M10 12v3M6.500 15h7M.6 1.500h3.800v4H.6zM2.500 5.500V13h2" /></Svg></TrayItem>
            <TrayItem><Svg size={16} box="0 0 16 16" sw={1.1}><path d="M.5 5.500H3l4-4v13l-4-4H.5zM9 6a3 3 0 0 1 0 4M11 4a6 6 0 0 1 0 8M13.200 2a9 9 0 0 1 0 12" /></Svg></TrayItem>
            <TrayItem>中</TrayItem>
            <TrayItem $w={36}><Ime>拼</Ime></TrayItem>
            <Clock>17:59<br />2023/3/10</Clock>
            <Notice>
                <svg width="16" height="16" viewBox="0 0 16 16"><path d="M0 0h16v13h-5v3l-3-3H0z" fill="#fff" /><path d="M3 4h10M3 6.500h10M3 9h6" stroke="#1b2543" /></svg>
                <NoticeCount>3</NoticeCount>
            </Notice>
            <ShowDesktop />
        </Tray>
    </TaskBar>
)

export default function App() {
    return (
        <Page>
            <GlobalStyle />
            <Browser />
            <Editor>
                <EditorHeader />
                <Body>
                    <Layers>
                        <LayersTitle>图层管理</LayersTitle>
                        <Layer><Svg size={12} box="0 0 12 12" sw={1}><path d="M5 1a5 5 0 1 0 6 6H5zM7 .5V5h4.500A5 5 0 0 0 7 .5z" /></Svg>饼图组件</Layer>
                        <Layer><Svg size={12} box="0 0 12 12" sw={1}><path d="M.5 0v11.500H12M3 7v4M5 3v8M7.500 2v9M10 4v7" /></Svg>柱形图组件</Layer>
                    </Layers>
                    <Canvas />
                    <Params>
                        <ParamsTitle>交互参数</ParamsTitle>
                        <ParamList>
                            <ParamCard id="a" name="图标轮播" type="字符串" value="1" />
                            <ParamCard id="b" name="开关时间" type="布尔值" value="true" select />
                            <AddParam><Plus size={11} />添加交互参数</AddParam>
                        </ParamList>
                    </Params>
                </Body>
                <TimingModal />
                <MarkFrame />
                <MarkArrow width="40" height="112" viewBox="0 0 40 112" fill="none" stroke="#f72f40" strokeWidth="4" strokeLinecap="round" strokeLinejoin="round">
                    <path d="M38 106L12 6M3 20L12 6l15 9" />
                </MarkArrow>
                <MarkNote>点击</MarkNote>
            </Editor>
            <Task />
        </Page>
    )
}
